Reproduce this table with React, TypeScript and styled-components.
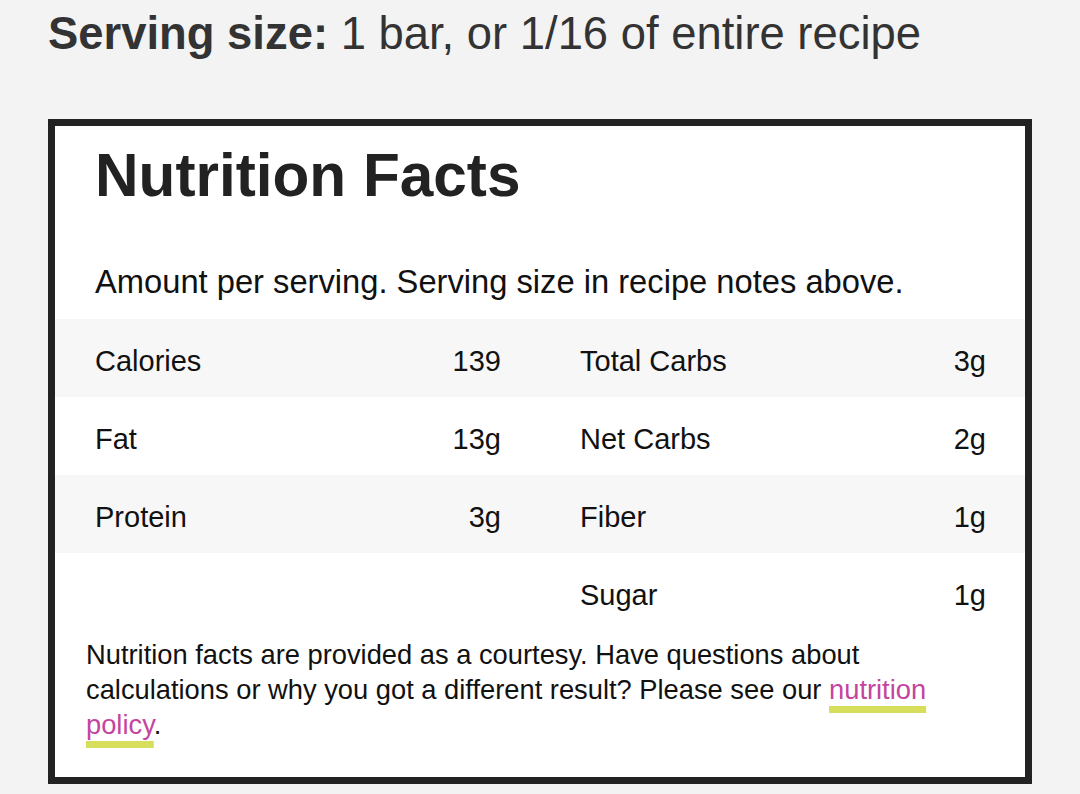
import styled, { createGlobalStyle } from 'styled-components';

interface NutrientRow {
  label: string;
  value: string;
  label2: string;
  value2: string;
}

const rows: NutrientRow[] = [
  { label: 'Calories', value: '139', label2: 'Total Carbs', value2: '3g' },
  { label: 'Fat', value: '13g', label2: 'Net Carbs', value2: '2g' },
  { label: 'Protein', value: '3g', label2: 'Fiber', value2: '1g' },
  { label: '', value: '', label2: 'Sugar', value2: '1g' },
];

const GlobalStyle = createGlobalStyle`
  body {
    margin: 0;
    background: #f3f3f3;
    font-family: 'Liberation Sans', Helvetica, Arial, sans-serif;
    color: #111;
  }
`;

const Page = styled.div`
  padding: 7px 48px 40px;
`;

const ServingSize = styled.p`
  margin: 0;
  font-size: 45.4px;
  line-height: 54px;
  color: #333;
  white-space: nowrap;

  strong {
    font-weight: 700;
  }
`;

const Card = styled.section`
  margin-top: 58px;
  width: 984px;
  box-sizing: border-box;
  border: 7px solid #222;
  background: #fff;
  padding: 13px 0 35px;
`;

const Title = styled.h2`
  margin: 0;
  padding: 0 40px;
  font-size: 60.3px;
  line-height: 73px;
  font-weight: 700;
  color: #222;
`;

const Amount = styled.p`
  margin: 51px 0 0;
  padding: 0 40px;
  font-size: 32.7px;
  line-height: 38px;
`;

const Table = styled.div`
  margin-top: 18px;
  display: flex;
  flex-direction: column;
`;

const Row = styled.div<{ $shaded: boolean }>`
  display: grid;
  grid-template-columns: 1fr 1fr;
  height: 78px;
  background: ${(p) => (p.$shaded ? '#f7f7f7' : '#fff')};
`;

const Cell = styled.div`
  display: flex;
  align-items: center;
  justify-content: space-between;
  padding: 6px 39px 0 40px;
  font-size: 29px;
`;

const Footer = styled.p`
  margin: 6px 0 0;
  padding: 0 31px;
  font-size: 27.3px;
  line-height: 35px;
`;

const PolicyLink = styled.a`
  color: #c4459e;
  text-decoration: underline;
  text-decoration-color: #d6de5c;
  text-decoration-thickness: 7px;
  text-underline-offset: 7px;
  text-decoration-skip-ink: none;
`;

export default function App() {
  return (
    <>
      <GlobalStyle />
      <Page>
        <ServingSize>
          <strong>Serving size:</strong> 1 bar, or 1/16 of entire recipe
        </ServingSize>
        <Card>
          <Title>Nutrition Facts</Title>
          <Amount>Amount per serving. Serving size in recipe notes above.</Amount>
          <Table>
            {rows.map((r, i) => (
              <Row key={r.label2} $shaded={i % 2 === 0}>
                <Cell>
                  <span>{r.label}</span>
                  <span>{r.value}</span>
                </Cell>
                <Cell>
                  <span>{r.label2}</span>
                  <span>{r.value2}</span>
                </Cell>
              </Row>
            ))}
          </Table>
          <Footer>
            Nutrition facts are provided as a courtesy. Have questions about calculations or why
            you got a different result? Please see our{' '}
            <PolicyLink href="#">nutrition policy</PolicyLink>.
          </Footer>
        </Card>
      </Page>
    </>
  );
}
